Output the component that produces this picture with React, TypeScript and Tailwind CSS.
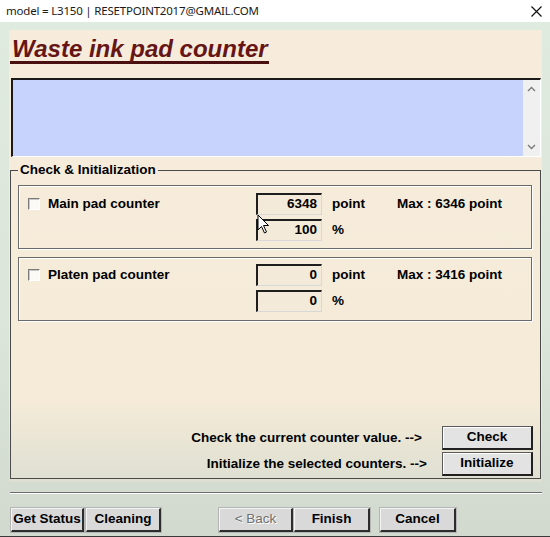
import React from "react";

const F = { fontFamily: '"Liberation Sans", Arial, sans-serif' };

function Checkbox() {
  return (
    <div className="w-[12px] h-[12px] border-t border-l border-[#7a7a7a] border-r border-b border-r-white border-b-white bg-[#fbfaf6] shadow-[inset_1px_1px_0_#c8c8c8]" />
  );
}

function Field({ value }: { value: string }) {
  return (
    <div className="w-[66px] h-[22px] border-t-2 border-l-2 border-[#1e1e1e] border-r border-b border-r-[#d8d8d8] border-b-[#d8d8d8] bg-[#f3ead9] flex items-center justify-end pr-[4px] text-[13.5px] font-bold text-black">
      {value}
    </div>
  );
}

function CounterPanel({
  label,
  v1,
  v2,
  max,
  cursor,
  pt,
}: {
  label: string;
  v1: string;
  v2: string;
  max: string;
  cursor?: boolean;
  pt: string;
}) {
  return (
    <div
      className={`relative w-[514px] h-[64px] border border-[#6a6a6a] shadow-[inset_1px_1px_0_#ffffff,1px_1px_0_#ffffff] flex pl-[9px] ${pt}`}
    >
      <div className="w-[228px] h-[22px] flex items-center gap-[8px]">
        <Checkbox />
        <span className="text-[13.5px] font-bold text-black">{label}</span>
      </div>
      <div className="flex flex-col gap-[4px]">
        <Field value={v1} />
        <Field value={v2} />
      </div>
      <div className="ml-[10px] w-[65px] flex flex-col gap-[4px] text-[13.5px] font-bold text-black">
        <div className="h-[22px] flex items-center">point</div>
        <div className="h-[22px] flex items-center">%</div>
      </div>
      <div className="h-[22px] flex items-center text-[13.5px] font-bold text-black">{max}</div>
      {cursor && (
        <svg
          className="absolute left-[238px] top-[28px]"
          width="14"
          height="21"
          viewBox="0 0 14 21"
        >
          <path
            d="M1 1 L1 16 L4.5 12.5 L7.5 19 L9.5 18 L6.5 11.5 L11.5 11.5 Z"
            fill="#ffffff"
            stroke="#000000"
            strokeWidth="1"
            strokeLinejoin="miter"
          />
        </svg>
      )}
    </div>
  );
}

function ActionButton({ children }: { children: React.ReactNode }) {
  return (
    <div className="w-[91px] h-[24px] border border-[#5a5a5a] border-r-2 border-b-2 border-r-[#202020] border-b-[#202020] bg-[#e3e3e3] shadow-[inset_1px_1px_0_#ffffff] flex items-center justify-center text-[13.5px] font-bold text-black">
      {children}
    </div>
  );
}

function BottomButton({
  children,
  w,
  disabled,
}: {
  children: React.ReactNode;
  w: string;
  disabled?: boolean;
}) {
  return (
    <div
      className={`${w} h-[24px] border-t border-l border-[#f4f4f4] border-r-2 border-b-2 border-r-[#2c2c2c] border-b-[#2c2c2c] bg-[#d9d9d9] shadow-[0_0_0_1px_#b5b5b5] flex items-center justify-center text-[13.5px] ${
        disabled ? "font-normal text-[#707070] [text-shadow:1px_1px_0_#ffffff]" : "font-bold text-black"
      }`}
    >
      {children}
    </div>
  );
}

export default function App() {
  return (
    <div className="w-[550px] h-[537px] flex flex-col overflow-hidden" style={F}>
      {/* Header */}
      <div className="h-[22px] bg-white flex items-center justify-between pl-[6px] pr-[8px]">
        <span
          className="text-[11.5px] text-[#1a1a1a] tracking-[-0.2px]"
          style={{ fontFamily: '"Noto Sans", "Open Sans", sans-serif' }}
        >
          model = L3150 | RESETPOINT2017@GMAIL.COM
        </span>
        <svg width="11" height="11" viewBox="0 0 11 11">
          <path d="M0.5 0.5 L10.5 10.5 M10.5 0.5 L0.5 10.5" stroke="#111" strokeWidth="1.2" />
        </svg>
      </div>

      {/* Body */}
      <div className="flex-1 flex flex-col bg-[linear-gradient(to_bottom,#e0ebdf_0%,#dbe5d9_60%,#d2d9cf_100%)] border-b border-[#3a3a3a]">
        {/* Cream panel */}
        <div className="ml-[9px] mt-[8px] w-[533px] h-[452px] flex flex-col bg-[linear-gradient(to_bottom,#f7ecdc_0%,#f5ebd8_82%,#dedfd2_100%)]">
          {/* Title */}
          <div className="pt-[7px] ml-[1px]">
            <span className="inline-block pl-[2px] pr-[1px] text-[24px] leading-[24px] font-bold italic text-[#661515] border-b-[3px] border-[#4a1010]">
              Waste ink pad counter
            </span>
          </div>

          {/* Blue box */}
          <div className="mt-[14px] ml-[2px] w-[530px] h-[79px] flex border-t-2 border-l-2 border-[#1a1a1a] border-r border-b border-r-white border-b-white bg-[#c7d3fd]">
            <div className="flex-1" />
            <div className="w-[17px] bg-[#f0f0f0] flex flex-col justify-between items-center py-[6px]">
              <svg width="9" height="6" viewBox="0 0 9 6">
                <path d="M1 5 L4.5 1.5 L8 5" fill="none" stroke="#7a7a7a" strokeWidth="1.4" />
              </svg>
              <svg width="9" height="6" viewBox="0 0 9 6">
                <path d="M1 1 L4.5 4.5 L8 1" fill="none" stroke="#7a7a7a" strokeWidth="1.4" />
              </svg>
            </div>
          </div>

          {/* Group box */}
          <fieldset className="mt-[5px] ml-[1px] w-[531px] h-[317px] border border-[#4a4a4a] pl-[7px] pt-[7px] pb-[3px] pr-[7px]">
            <legend className="px-[2px] text-[13.5px] leading-[16px] font-bold text-black">
              Check &amp; Initialization
            </legend>
            <CounterPanel label="Main pad counter" v1="6348" v2="100" max="Max : 6346 point" cursor pt="pt-[7px]" />
            <div className="mt-[8px]">
              <CounterPanel label="Platen pad counter" v1="0" v2="0" max="Max : 3416 point" pt="pt-[6px]" />
            </div>
            <div className="mt-[105px] flex flex-col gap-[2px] items-end">
              <div className="flex items-center gap-[20px]">
                <span className="text-[13.5px] font-bold text-black">Check the current counter value. --&gt;</span>
                <ActionButton>Check</ActionButton>
              </div>
              <div className="flex items-center gap-[15px]">
                <span className="text-[13.5px] font-bold text-black">Initialize the selected counters. --&gt;</span>
                <ActionButton>Initialize</ActionButton>
              </div>
            </div>
          </fieldset>
        </div>

        {/* Separator */}
        <div className="mt-[10px] ml-[10px] w-[532px] border-t border-[#6c6c6c] border-b border-b-white" />

        {/* Bottom buttons */}
        <div className="mt-[14px] ml-[11px] flex items-center">
          <BottomButton w="w-[73px]">Get Status</BottomButton>
          <div className="ml-[2px]">
            <BottomButton w="w-[75px]">Cleaning</BottomButton>
          </div>
          <div className="ml-[58px]">
            <BottomButton w="w-[74px]" disabled>
              &lt; Back
            </BottomButton>
          </div>
          <div className="ml-[1px]">
            <BottomButton w="w-[76px]">Finish</BottomButton>
          </div>
          <div className="ml-[10px]">
            <BottomButton w="w-[76px]">Cancel</BottomButton>
          </div>
        </div>
      </div>
    </div>
  );
}
